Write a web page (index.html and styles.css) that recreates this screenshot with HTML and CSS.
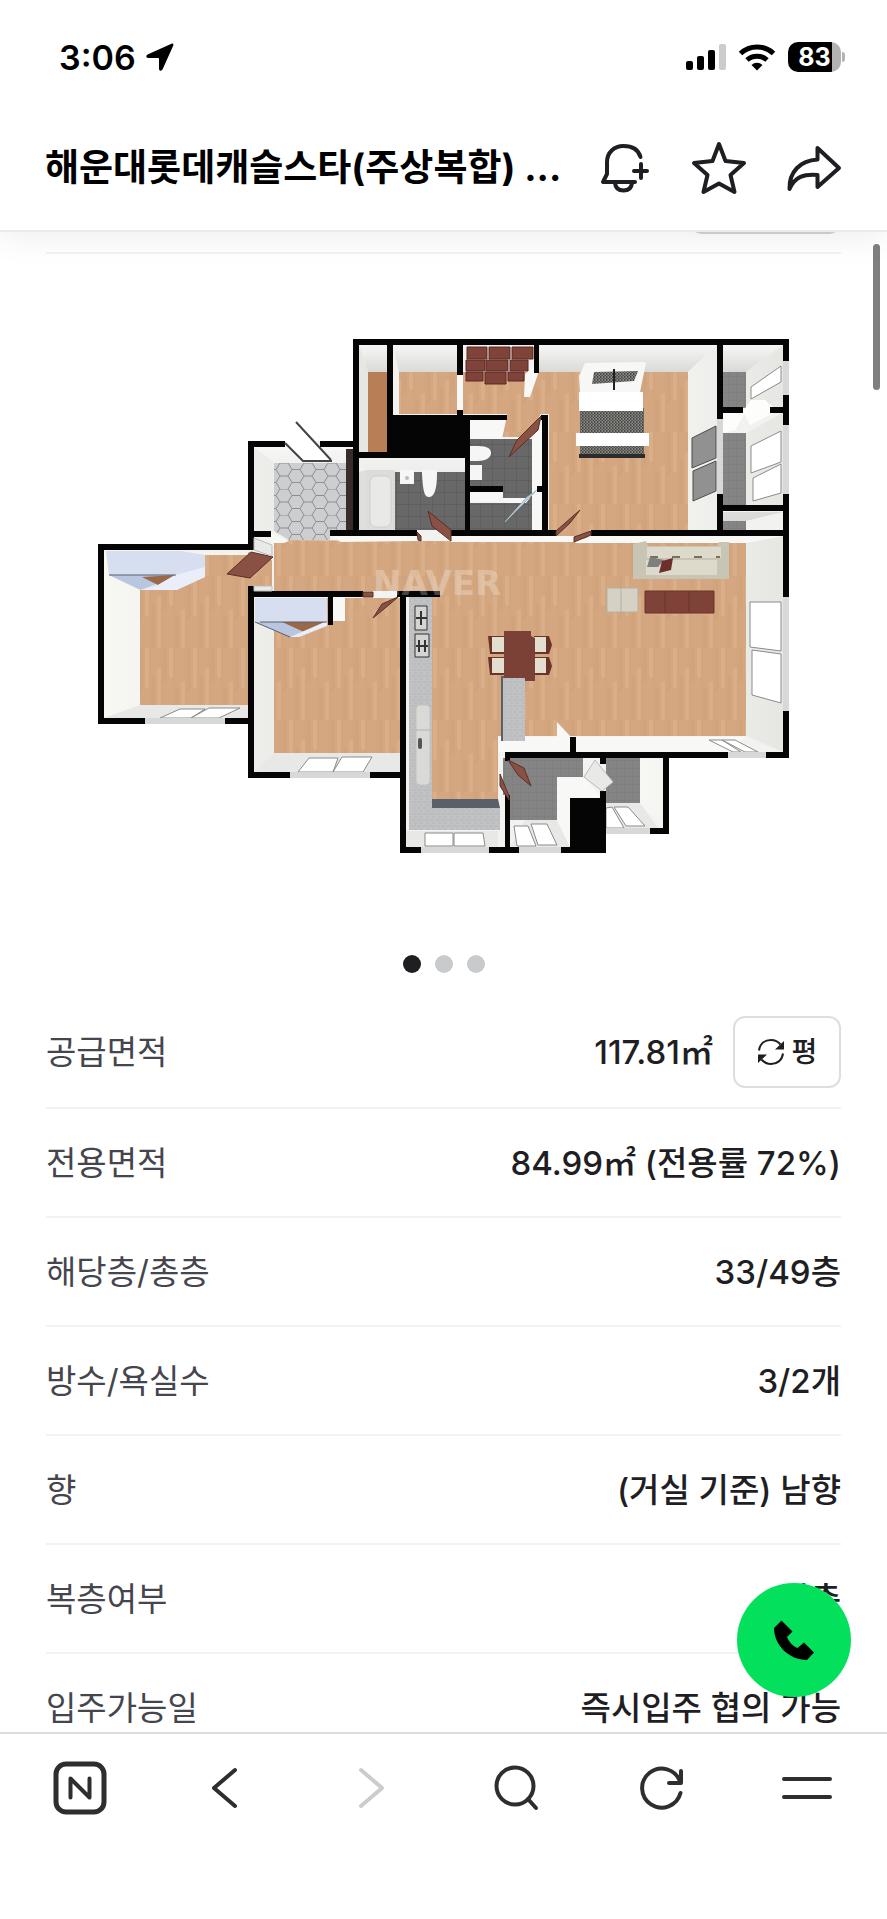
FILE: index.html
```html
<!DOCTYPE html>
<html lang="ko">
<head>
    <meta charset="UTF-8">
    <meta name="viewport" content="width=device-width, initial-scale=1.0">
    <title>해운대롯데캐슬스타(주상복합)</title>
    <link rel="stylesheet" href="styles.css">
</head>
<body>
    <header class="header">
        <div class="status-bar">
            <div class="status-left">
                <span class="clock">3:06</span>
                <svg class="icon-location" width="28" height="28" viewBox="0 0 28 28">
                    <path d="M25.500 .8 1.500 11.500C-.3 12.400 .1 14.900 2.100 15H12.300Q13 15 13 15.700V26C13.100 28 15.600 28.400 16.500 26.600L27.300 2.600C27.900 1.100 26.700 .2 25.500 .8Z"/>
                </svg>
            </div>
            <div class="status-right">
                <svg width="40" height="28" viewBox="0 0 40 28">
                    <rect x="0" y="18" width="7" height="9" rx="2"/>
                    <rect x="11" y="13" width="7" height="14" rx="2"/>
                    <rect x="22" y="7" width="7" height="20" rx="2"/>
                    <rect x="33" y="1" width="7" height="26" rx="2" fill="#ccc"/>
                </svg>
                <svg width="38" height="28" viewBox="0 0 38 28">
                    <path d="M2.500 10.500a24 24 0 0 1 33 0M9 17a15 15 0 0 1 20 0" fill="none" stroke="#000" stroke-width="5"/>
                    <path d="M19 27.500l-5.500-5.500a8 8 0 0 1 11 0z"/>
                </svg>
                <div class="battery"><span>83</span></div>
            </div>
        </div>
        <div class="title-bar">
            <h1 class="title">해운대롯데캐슬스타(주상복합) ...</h1>
            <div class="title-actions">
                <button type="button" aria-label="알림">
                    <svg width="56" height="56" viewBox="0 0 56 56">
                        <path d="M44.500 17C42.500 10 36.500 6 27.500 6 18 6 11 12.500 11 22V34L7 42H39M19 43C19.500 48.500 23 50.500 27.500 50.500S35.500 48.500 36 43M45 24V38M38 31H51"/>
                    </svg>
                </button>
                <button type="button" aria-label="관심">
                    <svg width="56" height="56" viewBox="0 0 56 56">
                        <path d="M28 4L34.500 21 53 23 39.500 35 43.500 52 28 43.500 12.500 52 16.500 35 3 23 21.500 21Z"/>
                    </svg>
                </button>
                <button type="button" aria-label="공유">
                    <svg width="56" height="56" viewBox="0 0 56 56">
                        <path d="M31.500 8L53 28 31.500 47V35C18 34 9 36.500 3.500 49 3 32 14 20.500 31.500 19.500Z"/>
                    </svg>
                </button>
            </div>
        </div>
    </header>

    <main class="content">
        <div class="filter-row"><div class="filter-box"></div></div>

        <div class="plan">
            <svg class="plan-image" viewBox="46 254 795 692">
                <defs>
                    <pattern id="wood" width="48" height="72" patternUnits="userSpaceOnUse">
                        <rect width="48" height="72" fill="#d4a780"/>
                        <path d="M3 0v40M15 20v52M27 0v30M39 34v38" stroke="#d9ae88" stroke-width="4"/>
                        <path d="M9 26v46M21 0v34M33 40v32M45 0v44" stroke="#cea077" stroke-width="3" opacity=".6"/>
                        <path d="M6 0v72M18 0v72M30 0v72M42 0v72" stroke="#c5946b" stroke-width="1" opacity=".2"/>
                    </pattern>
                    <pattern id="tile" width="12" height="12" patternUnits="userSpaceOnUse">
                        <rect width="12" height="12" fill="#686868"/>
                        <path d="M0 0H12M0 0V12" stroke="#565656" stroke-width="1"/>
                    </pattern>
                    <pattern id="balcony" width="8" height="8" patternUnits="userSpaceOnUse">
                        <rect width="8" height="8" fill="#848484"/>
                        <path d="M0 0H8M0 0V8" stroke="#7a7a7a" stroke-width="1"/>
                    </pattern>
                    <pattern id="hex" x="272" y="463" width="24" height="26" patternUnits="userSpaceOnUse">
                        <rect width="24" height="26" fill="#cdced0"/>
                        <path d="M0 6.500H4L8 0H16L20 6.500H24M20 6.500L16 13H8L4 6.500M8 13L4 19.500H0M16 13L20 19.500H24M4 19.500L8 26M20 19.500L16 26" fill="none" stroke="#8e8e90" stroke-width="1"/>
                    </pattern>
                    <pattern id="stone" width="6" height="6" patternUnits="userSpaceOnUse">
                        <rect width="6" height="6" fill="#c0c2c4"/>
                        <path d="M0 1h3M3 4h3M1 3v2" stroke="#b4b7ba" stroke-width="1"/>
                    </pattern>
                    <pattern id="knit" width="3" height="3" patternUnits="userSpaceOnUse">
                        <rect width="3" height="3" fill="#4a4a48"/>
                        <path d="M0 0h1.500M1.500 2h1.500" stroke="#c4c4bf" stroke-width="1"/>
                    </pattern>
                    <linearGradient id="shade-v" x1="0" y1="0" x2="0" y2="1">
                        <stop offset="0" stop-color="#f7f7f6"/>
                        <stop offset="1" stop-color="#d9d9d8"/>
                    </linearGradient>
                    <linearGradient id="shade-h" x1="0" y1="0" x2="1" y2="0">
                        <stop offset="0" stop-color="#f7f7f4"/>
                        <stop offset="1" stop-color="#e6e6e3"/>
                    </linearGradient>
                </defs>

                <!-- inner wall faces -->
                <path fill="#f2f2f0" d="M98 544H248V441H353V339H789V758H669V834H606V853H400V778H248V724H98Z"/>
                <g fill="url(#shade-v)">
                    <path d="M359 345H387V372H368ZM393 345H457V372H399ZM539 345H717L688 372H539ZM723 345H783L746 372H723Z"/>
                    <path d="M254 447H346V463H274ZM359 459H465V472H366ZM723 512H783L746 521H723Z"/>
                </g>
                <g fill="url(#shade-h)">
                    <path d="M104 550L140 590V705L104 718ZM254 597L274 612V753L254 772ZM254 447L274 463V531H254ZM359 345L368 372V452H359Z"/>
                    <path d="M688 372L717 345V530H688ZM746 543L783 536V752L746 736ZM746 372L783 345V407H746ZM746 433L783 413V505H746ZM640 758H663V828L640 803Z"/>
                </g>
                <path fill="#e8e8e6" d="M104 718L140 705H248V718ZM254 772L274 753H400V772ZM406 847V831H498V847ZM510 847L525 820H557L570 847ZM606 828V803H640L658 828Z"/>

                <!-- floors -->
                <g fill="url(#wood)">
                    <path d="M140 555H248V705H140ZM274 598H400V753H274ZM399 372H457V414H399Z"/>
                    <path d="M274 540L746 543V736H498V799H432V591H274Z"/>
                    <path d="M462 372H688V530H590L588 539H556V530H549V414H541L525 437H502L507 414H462Z"/>
                    <path d="M248 552L272 560V586H248Z"/>
                </g>
                <path fill="#b77f55" d="M368 372H387V452H368Z"/>
                <path fill="url(#hex)" d="M274 463H346V531H330V540H289L274 531Z"/>
                <path fill="url(#tile)" d="M395 472H465V530H395ZM470 439H532V487H536V498H532V530H470V503H503V487H470Z"/>
                <path fill="url(#balcony)" d="M723 372H746V408H723ZM723 433H746V505H723ZM723 521H746V530H723ZM503 758H583V777H557V820H510V795H503ZM606 758H640V803H606Z"/>

                <!-- wall tops lit from above -->
                <path fill="#f8f8f7" d="M470 420H506L502 439H470ZM532 440L542 422V530H532ZM470 491H503L498 502H470ZM503 498H530L526 503H498ZM330 536H417V541L341 542ZM451 536H574V542H451ZM591 536H783L746 543H574ZM498 737H570V752H498ZM576 737H746L728 752H576ZM557 722L570 736V752L557 739ZM557 777H583L603 798H570V847L557 820ZM333 597H345V621H333ZM457 375H463V410H457ZM525 374L538 362V374L530 397H524ZM271 533L289 541 284 543H271Z"/>
                <path fill="#fdfdfc" d="M723 413H745L735 430L723 433ZM743 411L751 400H765L773 407V413L750 425Z"/>

                <!-- windows -->
                <g class="glass">
                    <path d="M751 387L781 366V382L751 399ZM751 446L781 431V462L751 473ZM753 478L781 464V493L753 501Z"/>
                    <path d="M750 602H781V651L750 647ZM752 650L781 654V703L752 695Z"/>
                    <path d="M160 718L180 709H205L191 718ZM191 718L209 708H240L219 718ZM298 772L309 758H338L333 772ZM333 772L342 757H372L363 772ZM425 833H453V846H425ZM454 833H483L485 846H454Z"/>
                    <path d="M514 826H528L536 846H517ZM531 824H547L557 845H538ZM606 808L612 807 624 828H606ZM614 807H628L645 826H626ZM709 740H722L741 752H733ZM722 740H735L758 752H745Z"/>
                </g>
                <path fill="#919191" stroke="#4c4c4c" d="M692 438L716 426V458L692 468ZM693 471L716 461V491L693 501Z"/>

                <!-- window sills in the outer wall -->
                <path fill="#d8d8d6" d="M783 361H789V395H783ZM783 425H789V494H783ZM783 597H789V711H783ZM717 419H723V494H717ZM145 718H225V724H145ZM290 772H370V778H290ZM421 847H489V853H421ZM519 847H561V853H519ZM606 828H650V834H606ZM728 752H766V758H728Z"/>

                <!-- walls -->
                <g fill="#050505">
                    <path d="M353 339H789V345H353ZM353 339H359V534H353ZM387 345H393V415H387ZM387 415H470V458H387ZM353 452H470V458H353ZM457 345H463V375H457ZM457 410H463V416H457ZM534 345H539V373H534Z"/>
                    <path d="M470 415H507V420H470ZM541 415H548V534H542V420H541ZM465 458H470V534H465ZM470 486H503V492H470ZM537 486H543V492H537ZM330 530H417V536H330ZM451 530H556V536H451ZM591 530H789V536H591Z"/>
                    <path d="M783 345H789V361H783ZM783 395H789V425H783ZM783 494H789V597H783ZM783 711H789V752H783ZM717 345H723V419H717ZM717 494H723V534H717ZM723 407H743V413H723ZM770 407H783V413H770ZM717 505H789V511H717Z"/>
                    <path d="M505 752H728V758H505ZM766 752H789V758H766ZM570 737H576V752H570ZM505 752H510V761H505ZM505 795H510V853H505ZM489 847H519V853H489ZM561 847H606V853H561ZM600 758H606V764H600ZM570 798H606V853H570ZM600 791H606V798H600ZM663 758H669V834H663ZM650 828H669V834H650Z"/>
                    <path d="M400 591H406V853H400ZM400 847H421V853H400ZM248 591H363V597H248ZM397 591H440V597H397ZM248 586H254V778H248ZM248 772H290V778H248ZM370 772H400V778H370ZM328 597H333V625H328Z"/>
                    <path d="M98 544H254V550H98ZM98 544H104V724H98ZM98 718H145V724H98ZM225 718H248V724H225ZM248 441H254V550H248ZM248 441H285V447H248ZM320 441H353V447H320ZM248 531H271V537H248Z"/>
                </g>

                <!-- doors -->
                <path fill="#3a2c2b" d="M346 449H353V530H346Z"/>
                <path fill="#fff" d="M286 441L296 422 332 460H303Z"/>
                <path fill="none" stroke="#444" stroke-width="2" d="M296 422L331 460M285 443L303 461H332"/>
                <path fill="#8a5044" stroke="#573027" stroke-width="1" d="M251 552L273 557 250 578 227 574ZM363 592H373V597H363ZM398 597L390 604 373 618 382 604ZM428 511L451 530V541L432 526ZM417 532L421 536V541L418 540ZM541 416L538 430 509 457 517 440ZM556 531L580 510 570 523 556 536ZM574 537L591 531V535L574 542ZM508 760L524 768 531 786 518 775ZM500 774L509 796V800L500 786Z"/>
                <path fill="#b9d3e0" stroke="#a3bcc9" stroke-width="1" d="M537 490L505 522 526 498Z"/>
                <path fill="#e9e9e7" stroke="#bbb" stroke-width="1" d="M584 777L595 760 613 782 602 791ZM254 538L272 545V556L254 550ZM254 586L272 586V591H254Z"/>

                <!-- built-in closets -->
                <path fill="#d6def0" d="M106 551H181L205 555V577L175 590H140L109 575ZM255 598H327V622H255Z"/>
                <path fill="#b9c6df" d="M109 575H177L141 590ZM255 622H327L290 637Z"/>
                <path fill="#99694a" d="M142 577L175 575 158 585ZM282 622H325L304 632Z"/>
                <path fill="#e9eef8" d="M158 585L175 575 205 567V577L177 590H140ZM290 637L327 621V626L299 637Z"/>
                <path fill="none" stroke="#59616d" stroke-width="1" d="M109 575H176M260 622H327M255 622L290 637"/>
                <g fill="#7f433a" stroke="#5a2923" stroke-width="1">
                    <path d="M467 347H487V359H467ZM489 347H510V359H489ZM512 347H533V359H512ZM466 360H485V371H466ZM486 360H508V371H486ZM510 360H528V371H510ZM466 372H483V381H466ZM485 372H506V384H485ZM508 372H524V381H508Z"/>
                </g>

                <!-- bathrooms -->
                <path fill="#dededd" d="M359 472L366 470V530H359Z"/>
                <rect x="366" y="470" width="29" height="60" rx="1" fill="#dcdcdb"/>
                <rect x="370" y="476" width="21" height="51" rx="6" fill="#e9e9e8" stroke="#d0d0cf"/>
                <path fill="#f6f6f6" d="M400 470H414V484H400ZM422 470H437V474C437 490 434 497 429 497S423 490 422 474Z"/>
                <path fill="#f6f6f6" d="M470 446H478C488 446 491 449 491 453S487 461 478 461H470ZM470 465H482V480H470Z"/>
                <circle cx="407" cy="478" r="2" fill="#bbb"/>

                <!-- bed -->
                <path fill="#f7f7f6" d="M585 363L645 362 646 363 640 392H580L579 376Z"/>
                <path fill="url(#knit)" d="M594 372L638 371 634 381 592 384ZM580 408H644V458H580Z"/>
                <path fill="#fff" d="M579 392H643V411H579ZM576 433H649V446H576Z"/>
                <path fill="#2c2c2c" d="M579 454H645V458H579Z"/>
                <path stroke="#222" stroke-width="2" d="M614 369V390"/>

                <!-- living room -->
                <path fill="#c9c5b5" d="M633 544L646 541 648 546H717L719 542H729V579H633Z"/>
                <path fill="#dddacb" d="M647 547H721V558H647ZM646 560H717V575H646Z"/>
                <path stroke="#77705f" stroke-width="2" stroke-dasharray="8 14" d="M650 557H720"/>
                <path fill="#7f7f7e" d="M650 557L664 560 658 567H647Z"/>
                <path fill="#6b302b" d="M662 561L673 558 671 570 659 573Z"/>
                <path fill="#d5d1c4" stroke="#b5b0a0" d="M607 588H638V612H607ZM621 588V612"/>
                <path fill="#7f4238" stroke="#6a3229" d="M645 591H714V613H645ZM665 591V613M689 591V613"/>

                <!-- dining table -->
                <path fill="#6a3429" d="M488 636H505V654H490ZM488 657H505V675H490ZM534 636H549L552 645 549 654H534ZM534 657H549L552 666 549 675H534Z"/>
                <path fill="#e3dfd0" d="M492 637H504V652H492ZM492 658H504V673H492ZM534 637H546V652H534ZM534 658H546V673H534Z"/>
                <path fill="#7b4036" d="M504 631H531V636L535 638V681H504Z"/>

                <!-- kitchen -->
                <path fill="#59606a" d="M432 799H498L500 808H432ZM501 676H504V741H501Z"/>
                <path fill="url(#stone)" d="M409 597H432V808H500V830H409ZM503 678H525V741H503Z"/>
                <path fill="#d4d4d2" stroke="#333" stroke-width="1" d="M415 606H427V630H415ZM415 634H429V657H415Z"/>
                <path fill="none" stroke="#333" stroke-width="2" d="M421 611V625M416 618H427M419 640V652M425 640V652M416 646H428"/>
                <rect x="416" y="705" width="14" height="80" rx="4" fill="#d9d9d5" stroke="#c2c2be"/>
                <rect x="418" y="738" width="4" height="11" rx="2" fill="#555"/>
                <path stroke="#b2b2ae" d="M416 730H430"/>

                <text class="watermark" x="373" y="595">NAVER</text>
            </svg>
            <div class="dots">
                <span class="dot active"></span>
                <span class="dot"></span>
                <span class="dot"></span>
            </div>
        </div>

        <dl class="info-list">
            <div class="info-row">
                <dt>공급면적</dt>
                <dd>
                    117.81㎡
                    <button type="button" class="unit-button">
                        <svg width="28" height="28" viewBox="0 0 28 28">
                            <path d="M2 12.500C3 5.500 8 2 14 2c4 0 7 1.500 9.500 4.500M26 15.500C25 22.500 20 26 14 26c-4 0-7-1.500-9.500-4.500" fill="none" stroke="#1e1e23" stroke-width="2"/>
                            <path d="M27 3v8.500h-9zM1 25v-8.500h9z" fill="#1e1e23"/>
                        </svg>
                        평
                    </button>
                </dd>
            </div>
            <div class="info-row">
                <dt>전용면적</dt>
                <dd>84.99㎡ (전용률 72%)</dd>
            </div>
            <div class="info-row">
                <dt>해당층/총층</dt>
                <dd>33/49층</dd>
            </div>
            <div class="info-row">
                <dt>방수/욕실수</dt>
                <dd>3/2개</dd>
            </div>
            <div class="info-row">
                <dt>향</dt>
                <dd>(거실 기준) 남향</dd>
            </div>
            <div class="info-row">
                <dt>복층여부</dt>
                <dd>단층</dd>
            </div>
            <div class="info-row">
                <dt>입주가능일</dt>
                <dd>즉시입주 협의 가능</dd>
            </div>
        </dl>

        <div class="scrollbar"></div>
        <button type="button" class="call-button" aria-label="전화">
            <svg width="42" height="42" viewBox="0 0 42 42">
                <path d="M8.500 1.500L1 9C1 26 16 41 34 41L41 33.500 31 23.500 24.500 29C20 27 16 23 14 18L19.500 12.500Z"/>
            </svg>
        </button>
    </main>

    <nav class="toolbar">
        <button type="button" aria-label="홈">
            <svg width="56" height="56" viewBox="0 0 56 56">
                <rect x="4" y="4" width="48" height="48" rx="10"/>
                <path d="M18.500 37.500V18.500L37.500 37.500V18.500"/>
            </svg>
        </button>
        <button type="button" aria-label="뒤로">
            <svg width="56" height="56" viewBox="0 0 56 56"><path d="M38 10L17 28 38 46"/></svg>
        </button>
        <button type="button" aria-label="앞으로" disabled>
            <svg width="56" height="56" viewBox="0 0 56 56"><path d="M18 10L39 28 18 46"/></svg>
        </button>
        <button type="button" aria-label="검색">
            <svg width="56" height="56" viewBox="0 0 56 56">
                <circle cx="27" cy="26" r="18.500"/>
                <path d="M40 39L48 48"/>
            </svg>
        </button>
        <button type="button" aria-label="새로고침">
            <svg width="56" height="56" viewBox="0 0 56 56">
                <path d="M46.500 33A19.500 19.500 0 1 1 46 21.500M47 11V23H35"/>
            </svg>
        </button>
        <button type="button" aria-label="메뉴">
            <svg width="56" height="56" viewBox="0 0 56 56"><path d="M5 19H51M5 37H51"/></svg>
        </button>
    </nav>
</body>
</html>
```
FILE: styles.css
```css
* {
    margin: 0;
    padding: 0;
    box-sizing: border-box;
}

body {
    font-family: Inter, 'Noto Sans CJK KR', sans-serif;
    background: #fff;
    color: #1e1e23;
    height: 100vh;
    display: flex;
    flex-direction: column;
}

button {
    background: none;
    border: none;
    font: inherit;
    color: inherit;
    cursor: pointer;
}

svg {
    display: block;
}

/* Header */
.header {
    position: relative;
    z-index: 1;
    background: #fff;
    border-bottom: 2px solid #ebebeb;
    box-shadow: 0 4px 32px rgba(0, 0, 0, 0.08);
}

.status-bar {
    height: 114px;
    padding: 0 46px 0 59px;
    display: flex;
    align-items: center;
    justify-content: space-between;
    color: #000;
}

.status-left,
.status-right {
    display: flex;
    align-items: center;
    gap: 12px;
}

.status-left {
    gap: 10px;
}

.clock {
    font-size: 34px;
    font-weight: 600;
}

.battery {
    position: relative;
    width: 53px;
    height: 30px;
    border-radius: 10px;
    background: linear-gradient(to right, #000 83%, #b3b3b3 83%);
    color: #fff;
    font-size: 25px;
    font-weight: 700;
    line-height: 30px;
    text-align: center;
}

.battery::after {
    content: "";
    position: absolute;
    left: 54px;
    top: 10px;
    width: 3px;
    height: 10px;
    border-radius: 0 3px 3px 0;
    background: #b3b3b3;
}

.title-bar {
    height: 116px;
    padding: 0 45px 8px;
    display: flex;
    align-items: center;
    justify-content: space-between;
}

.title {
    font-size: 37px;
    font-weight: 700;
    line-height: 48px;
    color: #000;
    white-space: nowrap;
}

.title-actions {
    display: flex;
    gap: 39px;
}

.title-actions path {
    fill: none;
    stroke: #1e1e23;
    stroke-width: 4;
    stroke-linecap: round;
    stroke-linejoin: round;
}

/* Content */
.content {
    position: relative;
    flex: 1;
    min-height: 0;
    overflow: hidden;
}

.filter-row {
    display: flex;
    justify-content: flex-end;
    height: 22px;
    margin: 0 46px;
    border-bottom: 2px solid #f2f2f4;
}

.filter-box {
    width: 151px;
    height: 72px;
    margin-top: -70px;
    border: 2px solid #d4d4d4;
    border-radius: 12px;
}

.plan {
    padding: 0 46px;
}

.plan-image {
    width: 100%;
}

.watermark {
    font-family: 'DejaVu Sans', sans-serif;
    font-size: 34px;
    font-weight: 700;
    fill: #fff;
    opacity: 0.25;
}

.dots {
    display: flex;
    justify-content: center;
    gap: 14px;
    padding: 9px 0 24px;
}

.dot {
    width: 18px;
    height: 18px;
    border-radius: 50%;
    background: #c9cacc;
}

.dot.active {
    background: #1e1e23;
}

.info-list {
    padding: 0 46px;
}

.info-row {
    display: flex;
    align-items: center;
    justify-content: space-between;
    min-height: 109px;
    padding: 19px 0;
    border-bottom: 2px solid #f2f2f4;
    font-size: 33px;
    line-height: 48px;
}

.info-row dt {
    color: #45454d;
}

.info-row dd {
    display: flex;
    align-items: center;
    gap: 20px;
    font-weight: 500;
}

.unit-button {
    display: flex;
    align-items: center;
    justify-content: center;
    gap: 7px;
    width: 108px;
    height: 72px;
    border: 2px solid #dedede;
    border-radius: 12px;
    font-size: 28px;
}

.scrollbar {
    position: absolute;
    top: 12px;
    right: 7px;
    width: 7px;
    height: 146px;
    border-radius: 4px;
    background: #7f7f7f;
}

.call-button {
    position: absolute;
    right: 36px;
    bottom: 35px;
    width: 114px;
    height: 114px;
    border-radius: 50%;
    background: #03e05b;
    display: flex;
    align-items: center;
    justify-content: center;
}

/* Bottom toolbar */
.toolbar {
    display: flex;
    height: 187px;
    padding: 0 7px 78px;
    border-top: 2px solid #dcdcdc;
}

.toolbar button {
    flex: 1;
    display: flex;
    align-items: center;
    justify-content: center;
}

.toolbar svg {
    fill: none;
    stroke: #2e2e2e;
    stroke-width: 4;
    stroke-linecap: round;
    stroke-linejoin: round;
}

.toolbar rect {
    stroke-width: 5;
}

.toolbar button:disabled svg {
    stroke: #ccc;
}

.glass path {
    fill: #fff;
    stroke: #8b8b8b;
    stroke-width: 1;
}
```
